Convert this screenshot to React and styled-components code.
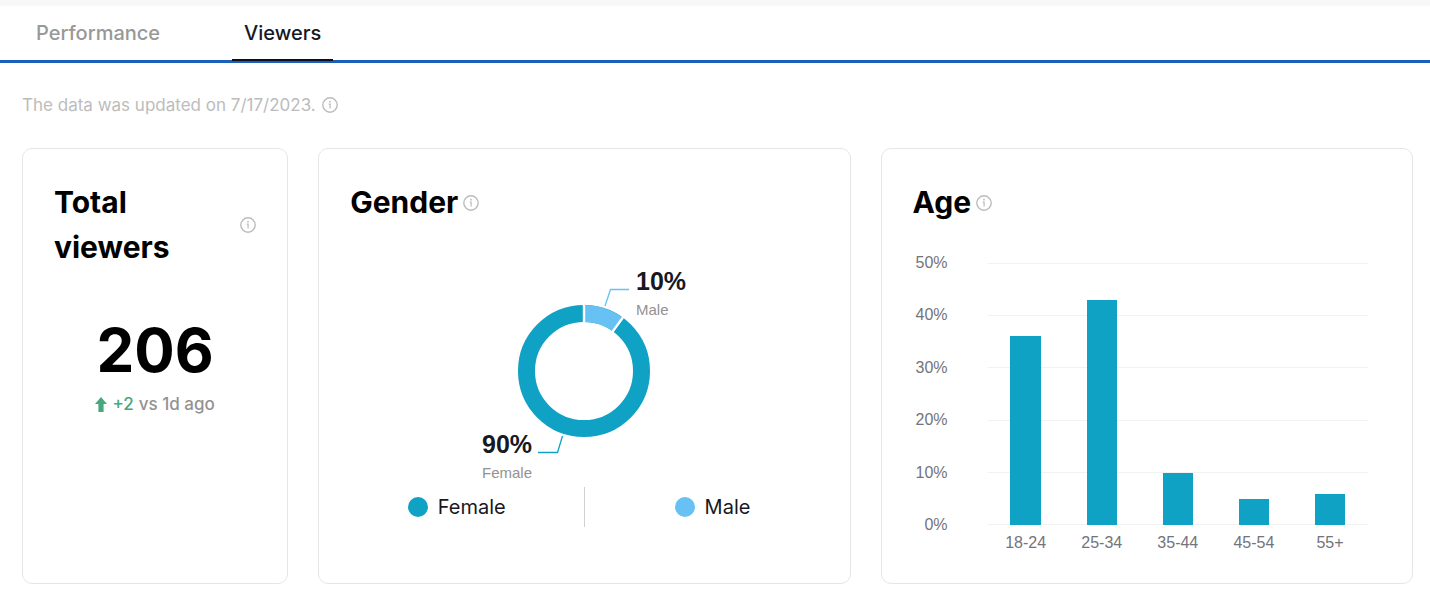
import React from "react";
import styled, { createGlobalStyle } from "styled-components";

const TEAL = "#10a2c5";
const SKY = "#67c1f3";
const CHART_FONT = '"Liberation Sans", Arial, sans-serif';

const GlobalStyle = createGlobalStyle`
  * { box-sizing: border-box; }
  body {
    margin: 0;
    background: #fff;
    color: #161823;
    font-family: Inter, "Liberation Sans", sans-serif;
  }
`;

const Page = styled.div`
  border-top: 6px solid #f8f8f8;
`;

const Tabs = styled.nav`
  display: flex;
  gap: 60px;
  padding-left: 24px;
  border-bottom: 3px solid #1a60b8;
`;

const Tab = styled.button`
  margin-bottom: -1px;
  padding: 1px 12px 0;
  height: 55px;
  border: 0;
  border-bottom: 2px solid ${(p) => (p.$active ? "#0b0f1f" : "transparent")};
  background: none;
  color: ${(p) => (p.$active ? "#161823" : "#989898")};
  font: 500 20px/24px Inter, sans-serif;
  cursor: pointer;
`;

const Main = styled.main`
  padding: 30px 17px 11px 22px;
`;

const Updated = styled.p`
  display: flex;
  align-items: center;
  gap: 6px;
  margin: 0 0 31px;
  color: #bcbcbc;
  font-size: 17px;
  line-height: 24px;
`;

const Cards = styled.div`
  display: grid;
  grid-template-columns: minmax(0, 1fr) minmax(0, 2fr) minmax(0, 2fr);
  gap: 30px;
`;

const Card = styled.section`
  padding: 31px 31px 30px;
  border: 1px solid #e6e6e6;
  border-radius: 10px;
`;

const CardHeader = styled.header`
  display: flex;
  align-items: center;
  gap: 5px;
`;

const Title = styled.h2`
  margin: 0;
  color: #000;
  font-size: 30px;
  font-weight: 700;
  line-height: 45px;
`;

const IconSvg = styled.svg`
  display: block;
  flex: none;
  color: #bcbcbc;
`;

const Total = styled.div`
  margin-top: 44px;
  color: #000;
  font: 700 60px/72px Inter, sans-serif;
  text-align: center;
`;

const Delta = styled.div`
  display: flex;
  align-items: center;
  justify-content: center;
  gap: 5px;
  margin-top: 6px;
  color: #929292;
  font-size: 17px;
  font-weight: 500;
  line-height: 24px;
`;

const Gain = styled.span`
  color: #47a77d;
`;

const Donut = styled.svg`
  display: block;
  margin: 40px auto 0;
`;

const Share = styled.text`
  fill: #161823;
  font: 700 25px ${CHART_FONT};
`;

const ShareName = styled.text`
  fill: #929292;
  font: 400 15px ${CHART_FONT};
`;

const Legend = styled.ul`
  display: grid;
  grid-template-columns: 1fr 1fr;
  margin: 0 -21px;
  padding: 0;
  list-style: none;
`;

const LegendItem = styled.li`
  display: flex;
  align-items: center;
  justify-content: center;
  gap: 10px;
  font-size: 20px;
  line-height: 40px;

  & + & {
    border-left: 1px solid #d0d0d3;
  }
`;

const Dot = styled.span`
  width: 20px;
  height: 20px;
  border-radius: 50%;
  background: ${(p) => p.$color};
`;

const BarChart = styled.div`
  display: flex;
  align-items: flex-start;
  gap: 40px;
  margin-top: 28px;
  padding-right: 13px;
  color: #73747b;
  font: 400 16px/20px ${CHART_FONT};
`;

const YAxis = styled.div`
  display: flex;
  flex-direction: column;
  justify-content: space-between;
  width: 35px;
  height: 282px;
  text-align: right;
`;

const PlotColumn = styled.div`
  flex: 1;
  padding-top: 10px;
`;

const Plot = styled.div`
  display: grid;
  height: 262px;

  > * {
    grid-area: 1 / 1;
  }
`;

const GridLines = styled.div`
  display: flex;
  flex-direction: column;
  justify-content: space-between;
`;

const GridLine = styled.span`
  height: 1px;
  background: #f2f2f2;
`;

const Bars = styled.div`
  display: flex;
  align-items: flex-end;
  justify-content: space-around;
`;

const Bar = styled.div`
  width: 8%;
  background: ${TEAL};
`;

const XAxis = styled.div`
  display: grid;
  grid-template-columns: repeat(5, 1fr);
  margin-top: 8px;
  text-align: center;
`;

function InfoIcon() {
  return (
    <IconSvg width="16" height="16" viewBox="0 0 16 16" fill="none" aria-hidden="true">
      <circle cx="8" cy="8" r="7.2" stroke="currentColor" strokeWidth="1.4" />
      <circle cx="8" cy="4.7" r="0.9" fill="currentColor" />
      <path d="M6.7 7.2H8.1V11.6" stroke="currentColor" strokeWidth="1.2" />
    </IconSvg>
  );
}

function CardTop({ title }) {
  return (
    <CardHeader>
      <Title>{title}</Title>
      <InfoIcon />
    </CardHeader>
  );
}

const ages = [
  { label: "18-24", value: 36 },
  { label: "25-34", value: 43 },
  { label: "35-44", value: 10 },
  { label: "45-54", value: 5 },
  { label: "55+", value: 6 },
];
const ticks = [50, 40, 30, 20, 10, 0];

export default function App() {
  return (
    <Page>
      <GlobalStyle />
      <Tabs>
        <Tab type="button">Performance</Tab>
        <Tab type="button" $active>Viewers</Tab>
      </Tabs>
      <Main>
        <Updated>
          The data was updated on 7/17/2023.
          <InfoIcon />
        </Updated>
        <Cards>
          <Card>
            <CardTop title="Total viewers" />
            <Total>206</Total>
            <Delta>
              <svg width="12" height="15" viewBox="0 0 12 15" aria-hidden="true">
                <path d="M6 0 12 7H8.6V15H3.4V7H0Z" fill="#47a77d" />
              </svg>
              <Gain>+2</Gain>
              <span>vs 1d ago</span>
            </Delta>
          </Card>

          <Card>
            <CardTop title="Gender" />
            <Donut width="220" height="222" viewBox="0 0 220 222">
              <circle cx="110" cy="106" r="57.5" fill="none" stroke={TEAL} strokeWidth="17" />
              <path d="M110 48.5A57.5 57.5 0 0 1 143.8 59.5" fill="none" stroke={SKY} strokeWidth="17" />
              <path d="M110 38V59M150 51 137.2 68.6" stroke="#fff" strokeWidth="2.4" />
              <path d="M131 41 136.5 24.5H155" fill="none" stroke={SKY} strokeWidth="1.3" />
              <path d="M88.5 171 83.5 187.5H64" fill="none" stroke={TEAL} strokeWidth="1.3" />
              <Share x="162" y="25">10%</Share>
              <ShareName x="162" y="50">Male</ShareName>
              <Share x="8" y="188">90%</Share>
              <ShareName x="8" y="213">Female</ShareName>
            </Donut>
            <Legend>
              <LegendItem><Dot $color={TEAL} />Female</LegendItem>
              <LegendItem><Dot $color={SKY} />Male</LegendItem>
            </Legend>
          </Card>

          <Card>
            <CardTop title="Age" />
            <BarChart>
              <YAxis>
                {ticks.map((t) => <span key={t}>{t}%</span>)}
              </YAxis>
              <PlotColumn>
                <Plot>
                  <GridLines>
                    {ticks.map((t) => <GridLine key={t} />)}
                  </GridLines>
                  <Bars>
                    {ages.map((a) => (
                      <Bar key={a.label} style={{ height: `${a.value * 2}%` }} />
                    ))}
                  </Bars>
                </Plot>
                <XAxis>
                  {ages.map((a) => <span key={a.label}>{a.label}</span>)}
                </XAxis>
              </PlotColumn>
            </BarChart>
          </Card>
        </Cards>
      </Main>
    </Page>
  );
}
